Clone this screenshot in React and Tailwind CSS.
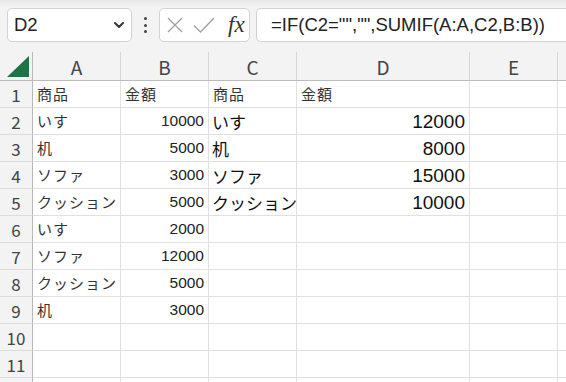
import React from "react";

const data = [
  ["商品", "金額", "商品", "金額"],
  ["いす", "10000", "いす", "12000"],
  ["机", "5000", "机", "8000"],
  ["ソファ", "3000", "ソファ", "15000"],
  ["クッション", "5000", "クッション", "10000"],
  ["いす", "2000"],
  ["ソファ", "12000"],
  ["クッション", "5000"],
  ["机", "3000"],
  [],
  [],
  [],
];

function Row({ n, r }) {
  const [a, b, c, d] = r;
  const big = n >= 2 && n <= 5;
  return (
    <div className="flex h-[27px] shrink-0">
      <div className="w-[33px] shrink-0 bg-[#f3f3f3] border-r border-r-[#b8b8b8] border-b border-b-[#dcdcdc] flex items-center justify-center text-[17px] text-[#444] font-['Noto_Sans_CJK_JP',sans-serif] leading-none">
        {n <= 11 ? n : ""}
      </div>
      <div className="w-[88px] shrink-0 border-r border-b border-[#e0e0e0] flex items-center pl-[4px] overflow-hidden whitespace-nowrap text-[15px] tracking-[1px] text-[#333] font-['Liberation_Sans','Noto_Sans_CJK_JP',sans-serif] leading-none">
        {a}
      </div>
      {n === 1 ? (
        <div className="w-[88px] shrink-0 border-r border-b border-[#e0e0e0] flex items-center pl-[4px] overflow-hidden whitespace-nowrap text-[15px] tracking-[1px] text-[#333] font-['Liberation_Sans','Noto_Sans_CJK_JP',sans-serif] leading-none">
          {b}
        </div>
      ) : (
        <div className="w-[88px] shrink-0 border-r border-b border-[#e0e0e0] flex items-center justify-end pr-[4px] overflow-hidden whitespace-nowrap text-[15.5px] text-[#222] font-['Liberation_Sans','Noto_Sans_CJK_JP',sans-serif] leading-none">
          {b}
        </div>
      )}
      {big ? (
        <div className="w-[88px] shrink-0 border-r border-b border-[#e0e0e0] flex items-center pl-[3px] overflow-hidden whitespace-nowrap text-[17px] text-[#111] font-['Noto_Sans_CJK_JP',sans-serif] leading-none">
          {c}
        </div>
      ) : (
        <div className="w-[88px] shrink-0 border-r border-b border-[#e0e0e0] flex items-center pl-[4px] overflow-hidden whitespace-nowrap text-[15px] tracking-[1px] text-[#333] font-['Liberation_Sans','Noto_Sans_CJK_JP',sans-serif] leading-none">
          {c}
        </div>
      )}
      {big ? (
        <div className="w-[173px] shrink-0 border-r border-b border-[#e0e0e0] flex items-center justify-end pr-[4px] overflow-hidden whitespace-nowrap text-[19px] text-[#111] font-['Liberation_Sans',sans-serif] leading-none">
          {d}
        </div>
      ) : (
        <div className="w-[173px] shrink-0 border-r border-b border-[#e0e0e0] flex items-center pl-[4px] overflow-hidden whitespace-nowrap text-[15px] tracking-[1px] text-[#333] font-['Liberation_Sans','Noto_Sans_CJK_JP',sans-serif] leading-none">
          {d}
        </div>
      )}
      <div className="w-[88px] shrink-0 border-r border-b border-[#e0e0e0]" />
      <div className="flex-1 border-b border-[#e0e0e0]" />
    </div>
  );
}

export default function App() {
  const headCell =
    "shrink-0 border-r border-[#d6d6d6] flex items-center justify-center text-[19px] text-[#444] font-['Noto_Sans_CJK_JP',sans-serif] leading-none";
  return (
    <div className="w-[566px] h-[382px] overflow-hidden bg-white flex flex-col">
      {/* toolbar */}
      <div className="h-[52px] shrink-0 bg-[#f3f3f3] relative">
        <div className="absolute inset-x-0 top-0 h-[7px] bg-gradient-to-b from-[#e6e6e6] to-[#f3f3f3]" />
        <div className="relative flex items-start pt-[8px] pl-[7px]">
          <div className="w-[125px] h-[34px] bg-white border border-[#d2d2d2] rounded-[5px] flex items-center justify-between pl-[6px] pr-[6px]">
            <span className="text-[18.5px] text-[#222] font-['Liberation_Sans',sans-serif] leading-none">D2</span>
            <svg width="12" height="8" viewBox="0 0 12 8">
              <path d="M2 2 L6 6 L10 2" fill="none" stroke="#333" strokeWidth="2" strokeLinecap="round" strokeLinejoin="round" />
            </svg>
          </div>
          <div className="w-[27px] h-[34px] flex flex-col items-center justify-center gap-[3.5px]">
            <div className="w-[3px] h-[3px] rounded-full bg-[#444]" />
            <div className="w-[3px] h-[3px] rounded-full bg-[#444]" />
            <div className="w-[3px] h-[3px] rounded-full bg-[#444]" />
          </div>
          <div className="w-[91px] h-[34px] bg-white border border-[#d2d2d2] rounded-[5px] flex items-center pl-[6px]">
            <svg width="16" height="16" viewBox="0 0 16 16" className="ml-[1px]">
              <path d="M1 1 L15 15 M15 1 L1 15" stroke="#a0a0a0" strokeWidth="1.3" />
            </svg>
            <svg width="22" height="16" viewBox="0 0 22 16" className="ml-[10px]">
              <path d="M1 8.5 L7.5 15 L21 1" fill="none" stroke="#a0a0a0" strokeWidth="1.3" />
            </svg>
            <span className="ml-[13px] text-[23px] italic text-[#333] font-['Liberation_Serif',serif] leading-none -mt-[2px]">
              fx
            </span>
          </div>
          <div className="ml-[6px] flex-1 h-[34px] bg-white border border-r-0 border-[#d2d2d2] rounded-l-[5px] flex items-center pl-[14px] whitespace-nowrap overflow-hidden">
            <span className="text-[18.5px] text-[#222] font-['Liberation_Sans',sans-serif] leading-none">
              =IF(C2="","",SUMIF(A:A,C2,B:B))
            </span>
          </div>
        </div>
      </div>
      {/* column header */}
      <div className="h-[29px] shrink-0 flex bg-[#f3f3f3] border-b border-[#bcbcbc]">
        <div className="w-[33px] shrink-0 border-r border-[#b8b8b8] flex items-end justify-end pr-[3px] pb-[3px]">
          <svg width="22" height="21" viewBox="0 0 22 21">
            <polygon points="22,0 22,21 0,21" fill="#217346" />
          </svg>
        </div>
        <div className={"w-[88px] " + headCell}>A</div>
        <div className={"w-[88px] " + headCell}>B</div>
        <div className={"w-[88px] " + headCell}>C</div>
        <div className={"w-[173px] " + headCell}>D</div>
        <div className={"w-[88px] " + headCell}>E</div>
        <div className="flex-1" />
      </div>
      {data.map((r, i) => (
        <Row key={i} n={i + 1} r={r} />
      ))}
    </div>
  );
}
